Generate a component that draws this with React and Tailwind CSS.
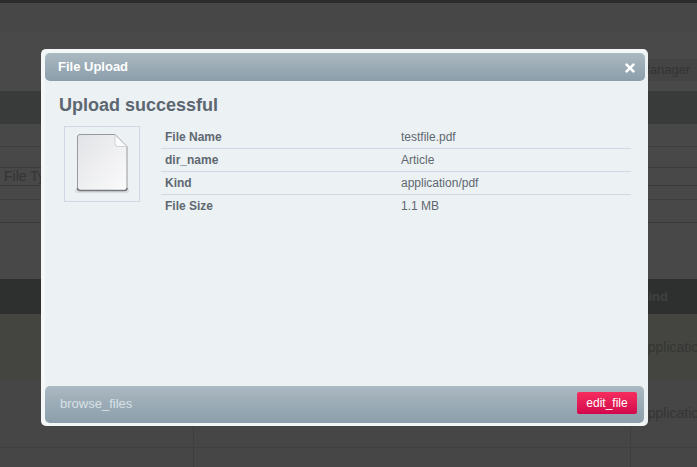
import React from "react";
import { FaTimes } from "react-icons/fa";

const rows = [
	["File Name", "testfile.pdf"],
	["dir_name", "Article"],
	["Kind", "application/pdf"],
	["File Size", "1.1 MB"],
];

const FileIcon = () => (
	<svg width="56" height="62" viewBox="0 0 56 62">
		<defs>
			<linearGradient id="page" x1="0" y1="0" x2="1" y2="1">
				<stop offset="0" stopColor="#e2e3e6" />
				<stop offset="1" stopColor="#fbfbfc" />
			</linearGradient>
		</defs>
		<rect x="1" y="55" width="54" height="5" rx="2.500" fill="#d9dde0" />
		<path d="M6 1.500H41L53 13.500V55a2.500 2.500 0 0 1-2.500 2.500H6A2.500 2.500 0 0 1 3.500 55V4A2.500 2.500 0 0 1 6 1.500Z" fill="url(#page)" stroke="#96999d" strokeWidth="1" />
		<path d="M3.500 55A2.500 2.500 0 0 0 6 57.500H50.500A2.500 2.500 0 0 0 53 55" fill="none" stroke="#76787b" strokeWidth="1.500" />
		<path d="M41 2V10.500A3 3 0 0 0 44 13.500H53Z" fill="#fbfbfb" stroke="#cfd1d3" strokeWidth="1" />
	</svg>
);

const Row = ({ height, className, children }) => (
	<div className={`grid grid-cols-[194px_437px_66px] ${height} ${className}`}>
		<div className="border-r border-[#3f3f3f]" />
		<div className="border-r border-[#3f3f3f]" />
		<div className="pl-[9px] whitespace-nowrap text-[14px]">{children}</div>
	</div>
);

const App = () => {
	return (
		<div className="relative w-[697px] h-[467px] overflow-hidden bg-[#474847] text-[#343534] font-['Liberation_Sans',Arial,sans-serif]">
			{/* page behind the overlay */}
			<div className="h-[3px] bg-[#2b2c2c]" />
			<div className="h-[30px] bg-[#464746]" />
			<div className="h-[58px] bg-[#484948] pt-[26px] flex justify-end">
				<div className="h-[22px] w-[60px] bg-[#434443] text-[13px] leading-[22px] pl-[2px]">Manager</div>
			</div>
			<div className="h-[33px] bg-[#393b3b]" />
			<div className="h-[23px] border-b border-[#3d3e3d]" />
			<div className="h-[20px]" />
			<div className="h-[19px] border-y border-[#3a3b3a] text-[14px] leading-[17px] pl-1">File Type</div>
			<div className="h-[14px] border-b border-[#3d3e3d]" />
			<div className="h-[23px] border-b border-[#3a3b3a]" />
			<div className="h-[56px]" />
			<div className="h-[35px] bg-[#2e3030] flex justify-end text-[13px] font-bold leading-[35px] text-[#3f4040] pr-[29px]">Kind</div>
			<Row height="h-[66px]" className="bg-[#444540] leading-[66px]">application/pdf</Row>
			<Row height="h-[68px]" className="bg-[#464646] border-b border-[#3f3f3f] leading-[66px]">application/pdf</Row>
			<Row height="h-[20px]" className="bg-[#464646]" />

			{/* modal */}
			<div className="absolute left-[41px] top-[49px] w-[607px] h-[377px] flex flex-col bg-[#ecf1f4] rounded-[5px] border-[4px] border-r-[3px] border-b-[3px] border-[#f4f7f8] border-r-[#ecf1f4]">
				<div className="h-[28px] shrink-0 flex items-center justify-between rounded-[5px] bg-gradient-to-b from-[#abb9c1] to-[#8b9eab] pl-[13px] pr-[8px] text-white text-[13px] font-bold">
					<span>File Upload</span>
					<FaTimes className="w-[14px] h-[14px] mt-[1px]" />
				</div>
				<div className="flex-1 px-[14px] pt-[13px]">
					<h1 className="text-[18px] leading-[22px] font-bold text-[#5c6670]">Upload successful</h1>
					<div className="flex mt-[10px]">
						<div className="w-[76px] h-[76px] ml-[5px] shrink-0 border border-[#ced9e3] flex items-center justify-center">
							<FileIcon />
						</div>
						<div className="ml-[21px] w-[470px] text-[12px] text-[#5f6870]">
							{rows.map(([label, value], i) => (
								<div key={label} className={`flex h-[23px] items-center ${i < 3 ? "border-b border-[#ced9e3]" : "pb-px"}`}>
									<span className="w-[240px] pl-[4px] font-bold">{label}</span>
									<span>{value}</span>
								</div>
							))}
						</div>
					</div>
				</div>
				<div className="h-[37px] mr-px shrink-0 flex items-start justify-between rounded-[5px] bg-gradient-to-b from-[#abb9c1] to-[#8b9eab] pl-[15px] pr-[7px] pt-[6px]">
					<span className="text-[13px] leading-[24px] text-[#d8e1e7]">browse_files</span>
					<button className="w-[60px] h-[22px] rounded-[2px] bg-gradient-to-b from-[#f72c5e] to-[#d2064d] text-white text-[12px]">edit_file</button>
				</div>
			</div>
		</div>
	);
};

export default App;
